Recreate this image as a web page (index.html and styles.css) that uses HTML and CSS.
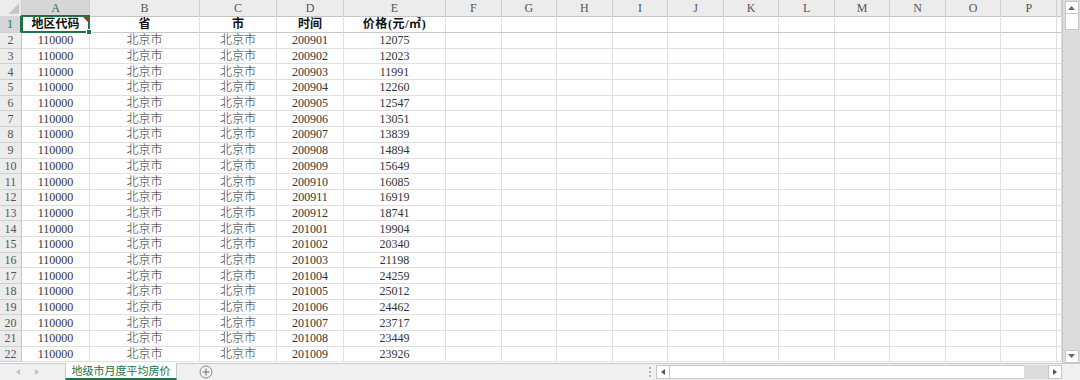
FILE: index.html
```html
<!DOCTYPE html>
<html lang="zh-CN">
<head>
<meta charset="utf-8">
<title>地级市月度平均房价</title>
<link rel="stylesheet" href="styles.css">
</head>
<body>
<div class="main">
  <div class="sheet">
    <div class="row head">
      <div class="corner"><svg width="22" height="16" viewBox="0 0 22 16"><polygon points="20,3 20,14 9,14" fill="#c4c4c4"/></svg></div>
      <div class="col sel-col">A</div><div class="col">B</div><div class="col">C</div><div class="col">D</div><div class="col">E</div><div class="col">F</div><div class="col">G</div><div class="col">H</div><div class="col">I</div><div class="col">J</div><div class="col">K</div><div class="col">L</div><div class="col">M</div><div class="col">N</div><div class="col">O</div><div class="col">P</div><div class="col"></div>
    </div>
    <div class="row r1">
      <div class="rh sel-row">1</div>
      <div class="cell active"><b>地区代码</b><span class="sel"><span class="cmt"></span><span class="handle"></span></span></div><div class="cell"><b>省</b></div><div class="cell"><b>市</b></div><div class="cell"><b>时间</b></div><div class="cell"><b class="wide">价格(元/㎡)</b></div><i></i><i></i><i></i><i></i><i></i><i></i><i></i><i></i><i></i><i></i><i></i><i></i>
    </div>
    <div class="row"><div class="rh">2</div><div>110000</div><div class="t">北京市</div><div class="t">北京市</div><div>200901</div><div>12075</div><i></i><i></i><i></i><i></i><i></i><i></i><i></i><i></i><i></i><i></i><i></i><i></i></div>
    <div class="row"><div class="rh">3</div><div>110000</div><div class="t">北京市</div><div class="t">北京市</div><div>200902</div><div>12023</div><i></i><i></i><i></i><i></i><i></i><i></i><i></i><i></i><i></i><i></i><i></i><i></i></div>
    <div class="row"><div class="rh">4</div><div>110000</div><div class="t">北京市</div><div class="t">北京市</div><div>200903</div><div>11991</div><i></i><i></i><i></i><i></i><i></i><i></i><i></i><i></i><i></i><i></i><i></i><i></i></div>
    <div class="row"><div class="rh">5</div><div>110000</div><div class="t">北京市</div><div class="t">北京市</div><div>200904</div><div>12260</div><i></i><i></i><i></i><i></i><i></i><i></i><i></i><i></i><i></i><i></i><i></i><i></i></div>
    <div class="row"><div class="rh">6</div><div>110000</div><div class="t">北京市</div><div class="t">北京市</div><div>200905</div><div>12547</div><i></i><i></i><i></i><i></i><i></i><i></i><i></i><i></i><i></i><i></i><i></i><i></i></div>
    <div class="row"><div class="rh">7</div><div>110000</div><div class="t">北京市</div><div class="t">北京市</div><div>200906</div><div>13051</div><i></i><i></i><i></i><i></i><i></i><i></i><i></i><i></i><i></i><i></i><i></i><i></i></div>
    <div class="row"><div class="rh">8</div><div>110000</div><div class="t">北京市</div><div class="t">北京市</div><div>200907</div><div>13839</div><i></i><i></i><i></i><i></i><i></i><i></i><i></i><i></i><i></i><i></i><i></i><i></i></div>
    <div class="row"><div class="rh">9</div><div>110000</div><div class="t">北京市</div><div class="t">北京市</div><div>200908</div><div>14894</div><i></i><i></i><i></i><i></i><i></i><i></i><i></i><i></i><i></i><i></i><i></i><i></i></div>
    <div class="row"><div class="rh">10</div><div>110000</div><div class="t">北京市</div><div class="t">北京市</div><div>200909</div><div>15649</div><i></i><i></i><i></i><i></i><i></i><i></i><i></i><i></i><i></i><i></i><i></i><i></i></div>
    <div class="row"><div class="rh">11</div><div>110000</div><div class="t">北京市</div><div class="t">北京市</div><div>200910</div><div>16085</div><i></i><i></i><i></i><i></i><i></i><i></i><i></i><i></i><i></i><i></i><i></i><i></i></div>
    <div class="row"><div class="rh">12</div><div>110000</div><div class="t">北京市</div><div class="t">北京市</div><div>200911</div><div>16919</div><i></i><i></i><i></i><i></i><i></i><i></i><i></i><i></i><i></i><i></i><i></i><i></i></div>
    <div class="row"><div class="rh">13</div><div>110000</div><div class="t">北京市</div><div class="t">北京市</div><div>200912</div><div>18741</div><i></i><i></i><i></i><i></i><i></i><i></i><i></i><i></i><i></i><i></i><i></i><i></i></div>
    <div class="row"><div class="rh">14</div><div>110000</div><div class="t">北京市</div><div class="t">北京市</div><div>201001</div><div>19904</div><i></i><i></i><i></i><i></i><i></i><i></i><i></i><i></i><i></i><i></i><i></i><i></i></div>
    <div class="row"><div class="rh">15</div><div>110000</div><div class="t">北京市</div><div class="t">北京市</div><div>201002</div><div>20340</div><i></i><i></i><i></i><i></i><i></i><i></i><i></i><i></i><i></i><i></i><i></i><i></i></div>
    <div class="row"><div class="rh">16</div><div>110000</div><div class="t">北京市</div><div class="t">北京市</div><div>201003</div><div>21198</div><i></i><i></i><i></i><i></i><i></i><i></i><i></i><i></i><i></i><i></i><i></i><i></i></div>
    <div class="row"><div class="rh">17</div><div>110000</div><div class="t">北京市</div><div class="t">北京市</div><div>201004</div><div>24259</div><i></i><i></i><i></i><i></i><i></i><i></i><i></i><i></i><i></i><i></i><i></i><i></i></div>
    <div class="row"><div class="rh">18</div><div>110000</div><div class="t">北京市</div><div class="t">北京市</div><div>201005</div><div>25012</div><i></i><i></i><i></i><i></i><i></i><i></i><i></i><i></i><i></i><i></i><i></i><i></i></div>
    <div class="row"><div class="rh">19</div><div>110000</div><div class="t">北京市</div><div class="t">北京市</div><div>201006</div><div>24462</div><i></i><i></i><i></i><i></i><i></i><i></i><i></i><i></i><i></i><i></i><i></i><i></i></div>
    <div class="row"><div class="rh">20</div><div>110000</div><div class="t">北京市</div><div class="t">北京市</div><div>201007</div><div>23717</div><i></i><i></i><i></i><i></i><i></i><i></i><i></i><i></i><i></i><i></i><i></i><i></i></div>
    <div class="row"><div class="rh">21</div><div>110000</div><div class="t">北京市</div><div class="t">北京市</div><div>201008</div><div>23449</div><i></i><i></i><i></i><i></i><i></i><i></i><i></i><i></i><i></i><i></i><i></i><i></i></div>
    <div class="row"><div class="rh">22</div><div>110000</div><div class="t">北京市</div><div class="t">北京市</div><div>201009</div><div>23926</div><i></i><i></i><i></i><i></i><i></i><i></i><i></i><i></i><i></i><i></i><i></i><i></i></div>
  </div>
  <div class="vscroll">
    <div class="sbtn"><svg width="7" height="4" viewBox="0 0 7 4"><polygon points="3.5,0 7,4 0,4" fill="#666"/></svg></div>
    <div class="vthumb"></div>
    <div class="vtrack"></div>
    <div class="sbtn"><svg width="7" height="4" viewBox="0 0 7 4"><polygon points="0,0 7,0 3.5,4" fill="#666"/></svg></div>
  </div>
</div>
<div class="bar">
  <div class="nav">
    <svg width="4" height="6" viewBox="0 0 4 6"><polygon points="4,0 4,6 0,3" fill="#c2c2c2"/></svg>
    <svg width="4" height="6" viewBox="0 0 4 6"><polygon points="0,0 4,3 0,6" fill="#c2c2c2"/></svg>
  </div>
  <div class="tab">地级市月度平均房价</div>
  <div class="add"><svg width="14" height="14" viewBox="0 0 14 14"><circle cx="7" cy="7" r="6" fill="none" stroke="#8a8a8a" stroke-width="1"/><path d="M7 3.5V10.5M3.5 7H10.5" stroke="#6e6e6e" stroke-width="1"/></svg></div>
  <div class="spacer"></div>
  <div class="dots"><span></span><span></span><span></span></div>
  <div class="hscroll">
    <div class="hbtn"><svg width="4" height="6" viewBox="0 0 4 6"><polygon points="4,0 4,6 0,3" fill="#555"/></svg></div>
    <div class="hthumb"></div>
    <div class="htrack"></div>
    <div class="hbtn"><svg width="4" height="6" viewBox="0 0 4 6"><polygon points="0,0 4,3 0,6" fill="#555"/></svg></div>
  </div>
  <div class="corner-fill"></div>
</div>
</body>
</html>
```
FILE: styles.css
```css
* { box-sizing: border-box; margin: 0; padding: 0; }
html, body { width: 1080px; height: 380px; overflow: hidden; background: #fff; }
body {
  font-family: "Liberation Serif", "Noto Sans CJK SC", serif;
  font-size: 12px;
  color: #333;
  display: flex;
  flex-direction: column;
}
.main { display: flex; height: 362.7px; }
.sheet { flex: 1; display: flex; flex-direction: column; min-width: 0; }

.row {
  display: grid;
  grid-template-columns: 22px 68px 110px 77px 67px 102px repeat(11, 55.55px) 1fr;
  height: 15.7px;
}
.row > * {
  border-right: 1px solid #e0e0e0;
  border-bottom: 1px solid #e0e0e0;
  display: flex;
  align-items: center;
  justify-content: center;
  white-space: nowrap;
  line-height: 1;
  font-style: normal;
}
.row > .t { color: #2a2a2a; font-weight: 300; }
.row.head { height: 16px; background: #ececec; }
.row.head > * { border-right-color: #cdcdcd; border-bottom-color: #c4c4c4; color: #555; font-size: 12px; }
.corner { align-items: flex-start !important; justify-content: flex-start !important; }
.row.head > .sel-col { background: #d6d6d6; color: #217346; border-bottom: 2px solid #217346; }

.row.r1 { height: 17px; }
.row.r1 > * { border-bottom-color: #c8c8c8; }
.row.r1 b { font-weight: bold; color: #111; font-size: 12px; }
.row.r1 b.wide { letter-spacing: 0.6px; }

.rh { background: #ececec; border-right-color: #c4c4c4 !important; border-bottom-color: #d0d0d0 !important; color: #555; }
.rh.sel-row { background: #d6d6d6; color: #217346; border-right: 2px solid #217346 !important; }

.cell.active { position: relative; overflow: visible; }
.sel {
  position: absolute;
  top: -1px; left: -1px; right: -1px; bottom: -1px;
  border: 2px solid #217346;
  z-index: 2;
}
.cmt {
  position: absolute;
  top: 0; right: 0;
  width: 0; height: 0;
  border-left: 5px solid transparent;
  border-top: 5px solid #e81010;
}
.handle {
  position: absolute;
  right: -4px; bottom: -4px;
  width: 6px; height: 6px;
  background: #217346;
  border: 1px solid #fff;
}

.vscroll {
  width: 18px;
  background: #dcdcdc;
  border-left: 1px solid #c8c8c8;
  display: flex;
  flex-direction: column;
  align-items: center;
  padding-top: 1px;
}
.sbtn {
  width: 14px; height: 13px;
  background: #fff;
  border: 1px solid #c6c6c6;
  display: flex; align-items: center; justify-content: center;
}
.vthumb { width: 14px; height: 16px; background: #fff; border: 1px solid #c6c6c6; border-top: none; }
.vtrack { flex: 1; }

.bar {
  flex: 1;
  display: flex;
  align-items: stretch;
  background: #f0f0f0;
  border-top: 1px solid #c8c8c8;
}
.nav { width: 65px; display: flex; align-items: center; padding-left: 16px; gap: 15px; }
.tab {
  width: 112px;
  background: #fff;
  color: #217346;
  font-family: "Noto Sans CJK SC", sans-serif;
  font-size: 11px;
  display: flex; align-items: center; justify-content: center;
  border-left: 1px solid #c8c8c8;
  border-right: 1px solid #c8c8c8;
  border-bottom: 2px solid #217346;
  margin-top: -1px;
  line-height: 1;
}
.add { width: 14px; margin-left: 22px; display: flex; align-items: center; }
.spacer { flex: 1; }
.dots { width: 12px; display: flex; flex-direction: column; align-items: center; justify-content: center; gap: 2px; }
.dots span { width: 2px; height: 2px; background: #b4b4b4; }
.hscroll { width: 406px; display: flex; align-items: center; }
.hbtn {
  width: 14px; height: 14px;
  background: #fff;
  border: 1px solid #c6c6c6;
  display: flex; align-items: center; justify-content: center;
}
.hthumb { width: 354px; height: 14px; background: #fff; border-top: 1px solid #c6c6c6; border-bottom: 1px solid #c6c6c6; }
.htrack { width: 24px; height: 14px; background: #dcdcdc; }
.corner-fill { width: 18px; }
```
